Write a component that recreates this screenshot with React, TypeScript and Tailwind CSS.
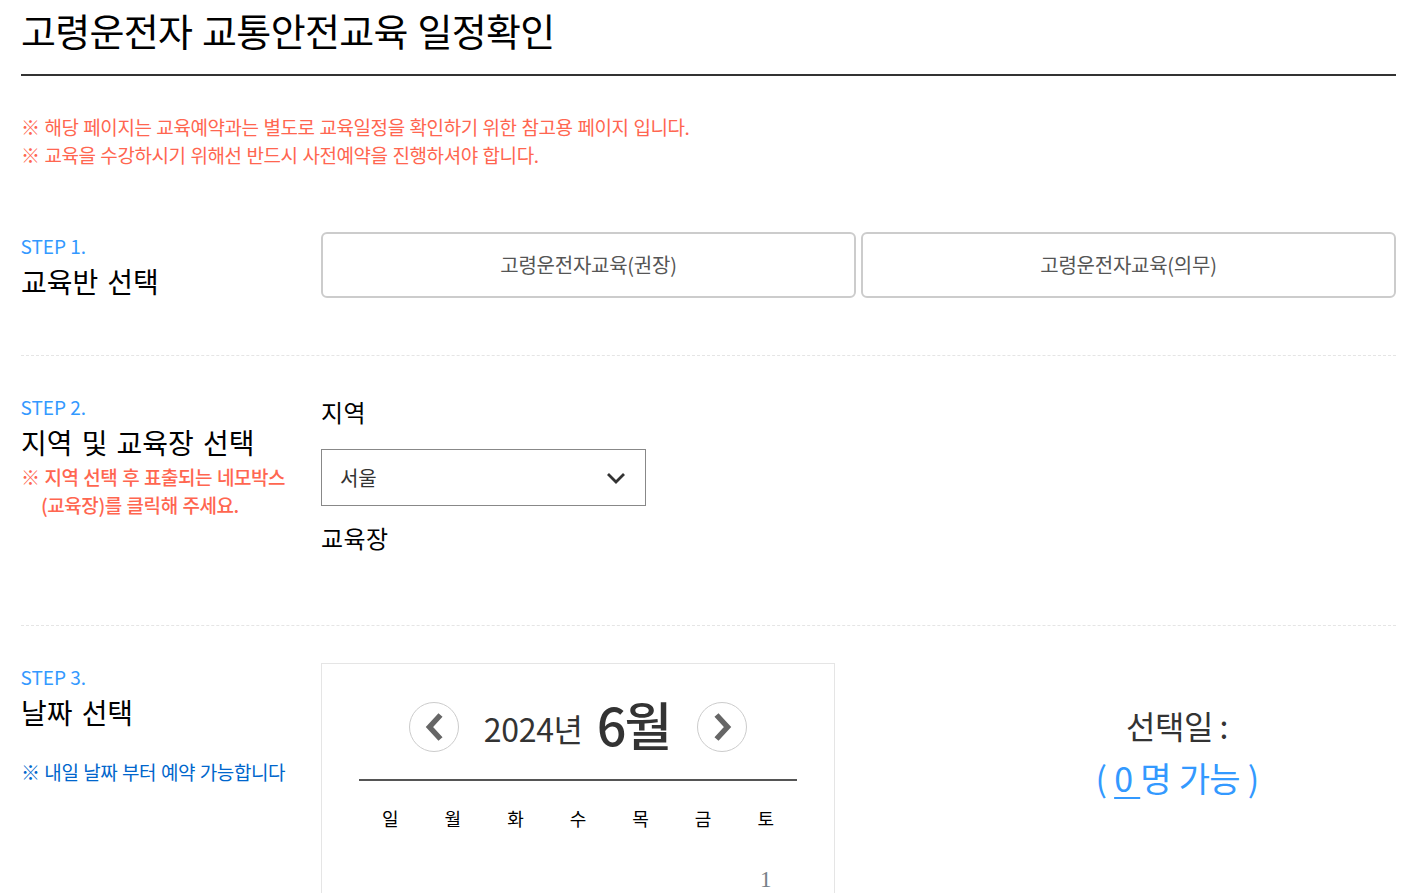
import React from "react";

function StepHead({ n, title }: { n: string; title: string }) {
  return (
    <>
      <p className="text-[19px] leading-[28px] text-[#3399ff] -ml-[0.5px]">STEP {n}.</p>
      <h3 className="mt-[1px] text-[28px] leading-[40px] text-black font-normal tracking-[-0.05px] [word-spacing:3px]">{title}</h3>
    </>
  );
}

function Arrow({ dir }: { dir: "l" | "r" }) {
  return (
    <button className="w-[50px] h-[50px] rounded-full border border-[#cccccc] bg-white flex items-center justify-center shrink-0">
      <svg width="22" height="32" viewBox="0 0 22 32" fill="none">
        <path
          d={dir === "l" ? "M17.5 4 L6.5 16 L17.5 28" : "M5.5 4 L16.5 16 L5.5 28"}
          stroke="#666666"
          strokeWidth="5.5"
        />
      </svg>
    </button>
  );
}

export default function App() {
  const days = ["일", "월", "화", "수", "목", "금", "토"];
  return (
    <div className="h-screen overflow-hidden bg-white pl-[21px] pr-[17px] font-['Noto_Sans_CJK_KR','Noto_Sans',sans-serif]">
      <h2 className="h-[76px] border-b-2 border-[#333333] text-[38px] leading-[60px] text-black font-normal tracking-[-0.7px] [word-spacing:2px]">
        고령운전자 교통안전교육 일정확인
      </h2>

      <div className="pt-[37px] text-[19px] leading-[28px] text-[#ff6650] tracking-[-0.43px] [word-spacing:1px]">
        <p>※ 해당 페이지는 교육예약과는 별도로 교육일정을 확인하기 위한 참고용 페이지 입니다.</p>
        <p>※ 교육을 수강하시기 위해선 반드시 사전예약을 진행하셔야 합니다.</p>
      </div>

      <section className="mt-[63px] h-[124px] flex border-b border-dashed border-[#e5e5e5]">
        <div className="w-[300px] shrink-0">
          <StepHead n="1" title="교육반 선택" />
        </div>
        <div className="flex-1 flex gap-[5px] h-[66px]">
          <button className="flex-1 border-2 border-[#cccccc] rounded-[6px] bg-white text-[20px] text-[#555555] tracking-[-0.25px]">
            고령운전자교육(권장)
          </button>
          <button className="flex-1 border-2 border-[#cccccc] rounded-[6px] bg-white text-[20px] text-[#555555] tracking-[-0.25px]">
            고령운전자교육(의무)
          </button>
        </div>
      </section>

      <section className="h-[270px] pt-[37px] flex border-b border-dashed border-[#e5e5e5]">
        <div className="w-[300px] shrink-0">
          <StepHead n="2" title="지역 및 교육장 선택" />
          <div className="mt-[1px] text-[19px] leading-[28px] text-[#ff6650] font-medium tracking-[-0.45px] [word-spacing:1px]">
            <p>※ 지역 선택 후 표출되는 네모박스</p>
            <p className="pl-[20px]">(교육장)를 클릭해 주세요.</p>
          </div>
        </div>
        <div className="flex-1">
          <p className="pt-[1px] text-[24px] leading-[36px] text-black tracking-[0.4px]">지역</p>
          <div className="mt-[19px] w-[325px] h-[57px] border border-[#888888] flex items-center justify-between pl-[18px] pr-[19px]">
            <span className="text-[20px] text-[#333333] pt-[1px] -tracking-[0.2px]">서울</span>
            <svg width="20" height="14" viewBox="0 0 20 14" fill="none">
              <path d="M2 3 L10 11 L18 3" stroke="#333333" strokeWidth="2.8" />
            </svg>
          </div>
          <p className="mt-[14px] text-[24px] leading-[36px] text-black tracking-[0.4px]">교육장</p>
        </div>
      </section>

      <section className="pt-[37px] flex">
        <div className="w-[300px] shrink-0">
          <StepHead n="3" title="날짜 선택" />
          <p className="mt-[26px] text-[19px] leading-[28px] text-[#0066cc] tracking-[-0.45px] [word-spacing:1px]">※ 내일 날짜 부터 예약 가능합니다</p>
        </div>
        <div className="w-[514px] shrink-0 border border-[#e5e5e5] px-[37px] pt-[36px] h-[400px]">
          <div className="flex items-center justify-center h-[54px] gap-[22px]">
            <Arrow dir="l" />
            <div className="flex items-center gap-[14px] text-[#333333] mx-[3px] pb-[4px] pr-[2px]">
              <span className="text-[32px] leading-[40px] tracking-[-0.3px] pt-[6px]">2024년</span>
              <span className="text-[52px] leading-[54px] font-medium tracking-[-2px] pb-[2px]">6월</span>
            </div>
            <Arrow dir="r" />
          </div>
          <div className="mt-[25px] border-t-2 border-[#555555] grid grid-cols-7 text-center">
            {days.map((d) => (
              <div key={d} className="h-[76px] pt-[23px] text-[18px] leading-[28px] text-black">{d}</div>
            ))}
            {[...Array(6)].map((_, i) => <div key={i} />)}
            <div className="mt-[9px] text-[23px] leading-[28px] text-[#778088] font-['Liberation_Serif',serif]">1</div>
          </div>
        </div>
        <div className="flex-1 pt-[36px] text-center pl-[123px]">
          <p className="text-[32px] leading-[52px] text-[#333333] tracking-[-0.5px]">선택일 :</p>
          <p className="text-[34px] leading-[53px] text-[#3399ff] tracking-[-0.7px] [word-spacing:1px] whitespace-pre">( <span className="underline decoration-2 underline-offset-[5px]">0 </span>명 가능 )</p>
        </div>
      </section>
    </div>
  );
}
